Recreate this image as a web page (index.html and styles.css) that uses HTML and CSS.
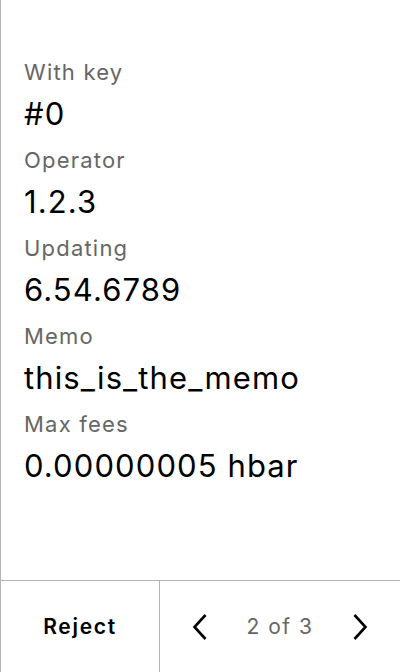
FILE: index.html
```html
<!DOCTYPE html>
<html>
<head>
<meta charset="utf-8">
<link rel="stylesheet" href="styles.css">
</head>
<body>
<div class="screen">
  <div class="content">
    <div class="field"><div class="label">With key</div><div class="value">#0</div></div>
    <div class="field"><div class="label">Operator</div><div class="value">1.2.3</div></div>
    <div class="field"><div class="label">Updating</div><div class="value">6.54.6789</div></div>
    <div class="field"><div class="label">Memo</div><div class="value">this_is_the_memo</div></div>
    <div class="field"><div class="label">Max fees</div><div class="value">0.00000005 hbar</div></div>
  </div>
  <div class="footer">
    <div class="reject">Reject</div>
    <div class="pager">
      <svg class="chev" width="16" height="28" viewBox="0 0 16 28"><path d="M13.5 2 L2.5 14 L13.5 26" fill="none" stroke="#000" stroke-width="2.6"/></svg>
      <span class="count">2 of 3</span>
      <svg class="chev" width="16" height="28" viewBox="0 0 16 28"><path d="M2.5 2 L13.5 14 L2.5 26" fill="none" stroke="#000" stroke-width="2.6"/></svg>
    </div>
  </div>
</div>
</body>
</html>
```
FILE: styles.css
```css
* { box-sizing: border-box; }
html, body { margin: 0; padding: 0; background: #fff; }
body { font-family: Inter, "Noto Sans", sans-serif; }
.screen {
  width: 400px;
  height: 672px;
  border-left: 1px solid #b3b3b3;
  display: flex;
  flex-direction: column;
}
.content {
  flex: 1;
  padding: 56px 0 0 23px;
}
.field { height: 88px; }
.label {
  font-size: 22px;
  line-height: 32px;
  letter-spacing: 1.2px;
  color: #666;
}
.value {
  font-size: 31px;
  line-height: 52px;
  letter-spacing: 1.1px;
  color: #000;
}
.footer {
  height: 92px;
  border-top: 1px solid #b3b3b3;
  display: flex;
}
.reject {
  width: 159px;
  border-right: 1px solid #b3b3b3;
  display: flex;
  align-items: center;
  justify-content: center;
  font-size: 21px;
  font-weight: 600;
  letter-spacing: 1.7px;
  color: #000;
}
.pager {
  flex: 1;
  display: flex;
  align-items: center;
  justify-content: space-between;
  padding: 0 32px 0 32px;
}
.count {
  font-size: 21px;
  letter-spacing: 1.5px;
  color: #666;
}
```
